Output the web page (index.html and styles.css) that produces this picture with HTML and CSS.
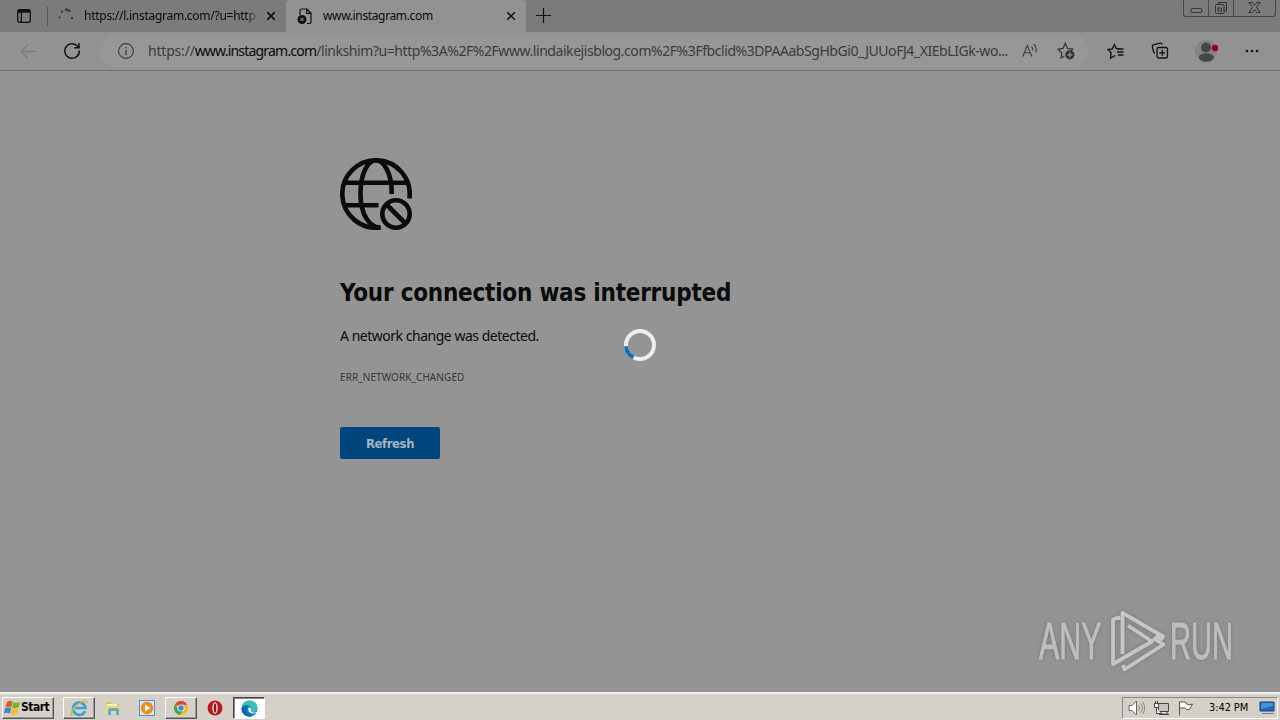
FILE: index.html
```html
<!DOCTYPE html>
<html lang="en">
<head>
    <meta charset="UTF-8">
    <title>www.instagram.com</title>
    <link rel="stylesheet" href="styles.css">
</head>
<body>
    <header class="tabstrip">
        <svg class="tab-actions" width="16" height="16" viewBox="0 0 16 16" fill="none" stroke="#111" stroke-width="1.3"><rect x="1.7" y="1.7" width="12.6" height="12.6" rx="2"/><path d="M2 3.2h12" stroke-width="3"/><path d="M5.3 4v10"/></svg>
        <div class="tab">
            <svg width="16" height="16" viewBox="0 0 16 16" fill="#343434"><circle cx="8.5" cy="1.7" r="1.5"/><circle cx="11.4" cy="2.8" r="1.4"/><circle cx="4" cy="3.7" r="1.1"/><circle cx="1.5" cy="9.5" r="1"/><circle cx="14" cy="10" r="1.2"/></svg>
            <span class="tab-title tab-title-fade">https://l.instagram.com/?u=http</span>
            <svg class="close" width="10" height="10" viewBox="0 0 10 10" stroke="#111" stroke-width="1.7"><path d="M1.2 1.2l7.6 7.6M8.8 1.2L1.2 8.8"/></svg>
        </div>
        <div class="tab active">
            <svg width="16" height="17" viewBox="0 0 16 17" fill="none" stroke="#111" stroke-width="1.2"><path d="M3 7V2.5Q3 1 4.5 1H10l4 4v9q0 1.5-1.5 1.5H10M9.7 1v4.4H14"/><circle cx="5" cy="11.5" r="4.5" fill="#111" stroke="none"/><path d="M3.5 10l3 3M6.5 10l-3 3" stroke="#aaa" stroke-width="1"/></svg>
            <span class="tab-title">www.instagram.com</span>
            <svg class="close" width="10" height="10" viewBox="0 0 10 10" stroke="#111" stroke-width="1.5"><path d="M1.2 1.2l7.6 7.6M8.8 1.2L1.2 8.8"/></svg>
        </div>
        <svg class="new-tab" width="15" height="15" viewBox="0 0 15 15" stroke="#111" stroke-width="1.2"><path d="M7.5 0v15M0 7.5h15"/></svg>
        <div class="window-buttons">
            <span class="win-min"><svg width="13" height="16" viewBox="0 0 13 16" fill="none" stroke="#333"><rect x=".8" y="8.5" width="11" height="4" rx="1.5"/></svg></span>
            <span class="win-max"><svg width="14" height="16" viewBox="0 0 14 16" fill="none" stroke="#333"><rect x="1.5" y="4.5" width="8.5" height="9" rx="1"/><rect x="4" y="8" width="3.5" height="3"/><path d="M4.5 4V2.5h8V11H10"/></svg></span>
            <span class="win-close"><svg width="13" height="16" viewBox="0 0 13 16" fill="none" stroke="#333"><path d="M.8 2.5h3.5l2.2 3 2.2-3h3.5L8.5 7.5l3.7 5H8.7l-2.2-3-2.2 3H.8l3.7-5z"/></svg></span>
        </div>
    </header>

    <nav class="toolbar">
        <svg class="back" width="17" height="15" viewBox="0 0 17 15" fill="none" stroke="#7b7b7b" stroke-width="1.3"><path d="M16.5 7.5H1M7.5 1L1 7.5 7.5 14"/></svg>
        <svg class="reload" width="18" height="18" viewBox="0 0 18 18" fill="none" stroke="#111" stroke-width="1.5"><path d="M16.3 8.5a7.3 7.3 0 1 1-2.5-5l2 2M16 1v4.7h-4.7"/></svg>
        <div class="omnibox">
            <svg class="info" width="16" height="16" viewBox="0 0 16 16" fill="none" stroke="#3d3d3d" stroke-width="1.1"><circle cx="8" cy="8" r="7.4"/><path d="M8 7v5M8 4v1.5" stroke-width="1.4"/></svg>
            <span class="url"><span class="scheme">https://</span><span class="host">www.instagram.com</span><span class="path">/linkshim?u=http%3A%2F%2Fwww.lindaikejisblog.com%2F%3Ffbclid%3DPAAabSgHbGi0_JUUoFJ4_XIEbLIGk-wo...</span></span>
            <svg class="read-aloud" width="16" height="16" viewBox="0 0 16 16" fill="none" stroke="#3d3d3d" stroke-width="1.1"><path d="M.8 13.5L5.3 2.5l4.5 11M2.4 9.7h5.9M9.5 3.5q1.7 1.8.8 4M11.8 1q3.8 3.6 1.7 8.2"/></svg>
            <svg class="fav-add" width="18" height="18" viewBox="0 0 18 18" fill="none" stroke="#333" stroke-width="1.2"><path d="M7.3 14.2L4 16l.8-5L1 7.2l5-.8L8.2 1.5l2.4 4.9 5.2.7-2 2"/><circle cx="12.8" cy="12.8" r="4.6" fill="#333" stroke="none"/><path d="M12.8 10.3v5M10.3 12.8h5" stroke="#999"/></svg>
        </div>
        <svg class="favorites" width="18" height="17" viewBox="0 0 18 17" fill="none" stroke="#111" stroke-width="1.3"><path d="M12 5.6H9.4L7.3 1.5 5.3 5.9 1 6.5l3.2 3.2L3.5 15l4.8-2.5M10.5 6h6M10 9h6.5M11 12h5.5"/></svg>
        <svg class="collections" width="18" height="18" viewBox="0 0 18 18" fill="none" stroke="#111" stroke-width="1.3"><path d="M3.8 11.5Q2.7 10.5 2.4 9L1.4 5q-.4-1.7 1-2.1L9 1.2q1.7-.3 2.3 1.3"/><rect x="6" y="5.5" width="10.5" height="10.5" rx="1.8"/><path d="M11.25 7.8v6M8.25 10.8h6"/></svg>
        <svg class="profile" width="24" height="24" viewBox="0 0 24 24"><circle cx="11" cy="12" r="11" fill="#848484"/><circle cx="11" cy="8.5" r="5" fill="#464646"/><ellipse cx="11.3" cy="18.5" rx="7.5" ry="4.2" fill="#464646"/><circle cx="20" cy="9" r="3.2" fill="#910714"/></svg>
        <svg class="more" width="14" height="4" viewBox="0 0 14 4" fill="#111"><circle cx="2" cy="2" r="1.3"/><circle cx="7" cy="2" r="1.3"/><circle cx="12" cy="2" r="1.3"/></svg>
    </nav>

    <main class="page">
        <svg class="globe" width="72" height="72" viewBox="0 0 72 72" fill="none" stroke="#0b0b0b" stroke-width="4.6">
            <path d="M69.4 40.5A33.7 33.7 0 1 0 40.5 69.4M4 24.7h64M4 47.3h34.5"/>
            <path d="M40.5 69.5C30 70 20.5 57 20.5 36S28 2.3 36 2.3 52 16 51.7 36"/>
            <circle cx="56" cy="56" r="13.7"/><path d="M47 47l18 18"/>
        </svg>
        <h1>Your connection was interrupted</h1>
        <p class="message">A network change was detected.</p>
        <p class="code">ERR_NETWORK_CHANGED</p>
        <button class="refresh">Refresh</button>

        <svg class="spinner" width="34" height="34" viewBox="0 0 34 34" fill="none" stroke-width="4"><circle cx="17" cy="17" r="14" stroke="#eee"/><path d="M3 18.3A14 14 0 0 0 10.5 29.4" stroke="#126fbc"/></svg>

        <div class="watermark">
            <span class="any">ANY</span>
            <svg width="56" height="62" viewBox="0 0 56 62" fill="none" stroke="#c6c6c6" stroke-width="3.8" stroke-linejoin="round">
                <path d="M8.5 10V7.5L3 9.5V54L42 31.5 18 15.5"/>
                <path d="M12.5 44V2.8L53 26.5l-1.5 2.5-6-3"/>
                <path d="M43 28L53.5 34.5 14.5 59.5l-1.7-4.5"/>
            </svg>
            <span class="run">RUN</span>
        </div>
    </main>

    <footer class="taskbar">
        <div class="start">
            <svg width="17" height="16" viewBox="0 0 17 16"><path d="M3 2Q5.5 0 8.5 1.5L7.4 7.2Q4.5 6 1.5 7.5z" fill="#e65a24"/><path d="M9.2 2q3 1.5 7 0l-1.6 5.5q-3 1.5-6.4.2z" fill="#79b52c"/><path d="M1.2 8.2q3-1.3 6-.2l-1.3 5.5Q3 12-.3 13.5z" fill="#3b89d0"/><path d="M7.9 8.5q3 1.2 6.4 0l-1.5 5.5q-3 1.5-6.4 0z" fill="#f6bd24"/></svg>
            <span>Start</span>
        </div>
        <div class="task raised">
            <svg width="18" height="18" viewBox="0 0 18 18" fill="none"><path d="M15 12A6.2 6.2 0 1 1 15.4 9H5" stroke="#35a4dd" stroke-width="2.7"/><path d="M3 15C-1 19 .5 12 6 7S18-.5 16.5 4" stroke="#e6b52d" stroke-width="1.4"/></svg>
        </div>
        <div class="task">
            <svg width="18" height="18" viewBox="0 0 18 18"><path d="M2 3h5l1 2h7v9H2z" fill="#e0c05c"/><path d="M3 5h10v5H3z" fill="#fff4b6"/><path d="M2 7h14v7H2z" fill="#f0d576"/><path d="M4 16v-5q0-2 2-2h7q2 0 2 2v5h-3v-4H7v4z" fill="#5cabd3"/></svg>
        </div>
        <div class="task">
            <svg width="18" height="18" viewBox="0 0 18 18"><rect x="1.5" y="1.5" width="15" height="15" fill="#d5e8f6" stroke="#4f8fc6"/><circle cx="9" cy="9" r="6.2" fill="#f18a16"/><path d="M7 5.5v7L12.5 9z" fill="#fff"/></svg>
        </div>
        <div class="task raised">
            <svg width="16" height="16" viewBox="0 0 16 16"><circle cx="8" cy="8" r="7" fill="#e9bd27"/><path d="M8 8L2 4.4A7 7 0 0 1 14.2 4.8H8z" fill="#d74637"/><path d="M2 4.4A7 7 0 0 0 7 15l3.5-5.5L8 11 5 9z" fill="#42a650"/><circle cx="8" cy="8" r="3.6" fill="#f3f3f3"/><circle cx="8" cy="8" r="2.7" fill="#4587d7"/></svg>
        </div>
        <div class="task opera">
            <svg width="16" height="16" viewBox="0 0 16 16"><circle cx="8" cy="8" r="7.5" fill="#bd1820"/><ellipse cx="8" cy="8" rx="2.7" ry="5.7" fill="#eee"/><ellipse cx="8" cy="8" rx="1.3" ry="4.8" fill="#9b1018"/></svg>
        </div>
        <div class="task pressed">
            <svg width="17" height="17" viewBox="0 0 17 17"><circle cx="8.5" cy="8.5" r="8" fill="#087fcb"/><path d="M.7 7A8 8 0 0 1 16.5 8q0 4-4.500 4-2.500 0-2-1.500 2-3.500-2-5Q4 4 .7 7z" fill="#37c5b4"/><path d="M.5 8.5Q3 4.5 7 6q-3 2-1.5 6t6.500 3.500Q8 18 4 15.200T.5 8.500z" fill="#1264ac"/><path d="M8.200 7q-1.700 2-.3 4.700 2.500 3 7.500 1l.7-.7q-3 1-5 0-2-.8-1-2.200.8-1.600-1.900-2.800z" fill="#fff"/></svg>
        </div>
        <div class="tray">
            <svg width="18" height="16" viewBox="0 0 18 16" fill="#fff" stroke="#666"><path d="M1 5.5h3L8.500 1v14L4 10.500H1z"/><path d="M10.500 5.500q2 2.500 0 5M12.500 3.500q4 4.500 0 9M14.700 2q4 6 0 12" fill="none" stroke="#888"/></svg>
            <svg width="17" height="16" viewBox="0 0 17 16" fill="#eee" stroke="#444"><path d="M5.500 3.500h10v8h-10z" fill="#c4c4c4"/><path d="M8 12v2h6v-2M6 14.500h10"/><path d="M1.500 3.500h4v4h-4zM2.500 1v2M4.500 1v2M3.500 7.500v6H8"/></svg>
            <svg width="17" height="16" viewBox="0 0 17 16" fill="#fff" stroke="#555"><path d="M2.500 15.500V1.500M2.500 2h6l1 2q3 1.500 6 0l-3 5.500q-3 .5-5-1.500h-5z"/></svg>
            <span class="clock">3:42 PM</span>
            <svg width="16" height="14" viewBox="0 0 16 14"><path d="M1 1h14v9H1z" fill="#2167bd" stroke="#174477"/><path d="M2 2h12v3L2 8z" fill="#4791db"/><path d="M3 12.500h12" stroke="#707987"/></svg>
        </div>
    </footer>
</body>
</html>
```

FILE: styles.css
```css
* { box-sizing: border-box; }
body { margin: 0; width: 1280px; height: 720px; overflow: hidden; display: flex; flex-direction: column; background: #949494; color: #0b0b0b; font-family: "Noto Sans", "Open Sans", sans-serif; }
svg { display: block; flex: none; }

.tabstrip { height: 32px; flex: none; display: flex; background: #7b7b7b; }
.tab-actions { margin: 8px 0 0 16px; }
.tab { display: flex; align-items: center; width: 239px; height: 32px; margin-left: 15px; padding: 0 10px 0 11px; position: relative; white-space: nowrap; }
.tab::before { content: ""; position: absolute; left: 0; top: 7px; width: 1px; height: 19px; background: #555; }
.tab-title { width: 176px; margin-left: 10px; font-size: 12px; line-height: 18px; letter-spacing: -0.36px; }
.tab-title-fade { letter-spacing: -0.27px; -webkit-mask-image: linear-gradient(to right, #000 92%, transparent); mask-image: linear-gradient(to right, #000 92%, transparent); }
.tab .close { margin-left: auto; }
.tab.active { width: 240px; margin-left: 0; background: #929292; border-radius: 4px 4px 0 0; }
.tab.active::before { display: none; }
.new-tab { margin: 8px 0 0 10px; }
.window-buttons { display: flex; margin: 0 4px 0 auto; height: 17px; border: 1px solid #484848; border-top: 0; border-radius: 0 0 3px 3px; }
.window-buttons span { display: flex; justify-content: center; width: 25px; border-right: 1px solid #484848; }
.window-buttons .win-close { width: 41px; border: 0; }

.toolbar { height: 39px; flex: none; display: flex; align-items: center; background: #929292; border-bottom: 1px solid #6f6f6f; }
.back { margin-left: 20px; }
.reload { margin-left: 26px; }
.omnibox { width: 990px; height: 32px; margin-left: 18px; padding-left: 19px; display: flex; align-items: center; background: #979797; border-radius: 16px; }
.url { width: 862px; flex: none; margin-left: 14px; font-size: 14px; line-height: 20px; white-space: nowrap; color: #3b3b3b; }
.scheme { letter-spacing: -0.2px; }
.host { color: #080808; letter-spacing: -0.8px; }
.path { letter-spacing: -0.44px; }
.read-aloud { margin-left: 12px; }
.fav-add { margin-left: 19px; }
.favorites { margin-left: 18px; }
.collections { margin-left: 26px; }
.profile { margin-left: 26px; }
.more { margin-left: 26px; }

.page { flex: 1; position: relative; padding: 87px 0 0 340px; }
h1 { margin: 45px 0 0; font: bold 24px/36px "DejaVu Sans Condensed", "DejaVu Sans", sans-serif; font-stretch: condensed; letter-spacing: -0.23px; white-space: nowrap; }
.message { margin: 15px 0 0; font-size: 14px; line-height: 20px; letter-spacing: -0.48px; }
.code { margin: 23px 0 0; font-size: 10px; line-height: 16px; letter-spacing: 0.08px; color: #373737; }
.refresh { display: block; width: 100px; height: 32px; margin-top: 42px; padding: 1px 0 0; border: 0; border-radius: 2px; background: #00457c; color: #a5b5c1; font: bold 13px/31px "DejaVu Sans Condensed", "DejaVu Sans", sans-serif; font-stretch: condensed; letter-spacing: -0.4px; }
.spinner { position: absolute; left: 623px; top: 257px; }
.watermark { position: absolute; right: 48px; bottom: 20px; display: flex; align-items: center; color: #bebebe; font: 52px/62px "Liberation Sans", sans-serif; filter: drop-shadow(0 0 2px #777); }
.watermark span { width: 62px; white-space: nowrap; transform: scaleX(.56); transform-origin: left; -webkit-text-stroke: 1px #bebebe; }
.watermark .any { transform: scaleX(.585); }
.watermark svg { margin: 0 4px 0 9px; }

.taskbar { height: 28px; flex: none; display: flex; align-items: center; padding: 2px 2px 0; background: #d5d0c8; border-top: 2px solid #f4f2ee; }
.start, .raised { border: 1px solid; border-color: #fff #555 #555 #fff; box-shadow: inset -1px -1px #999; }
.start { width: 52px; height: 22px; display: flex; align-items: center; padding-left: 1px; font: bold 12px/18px "DejaVu Sans Condensed", "DejaVu Sans", sans-serif; font-stretch: condensed; letter-spacing: -0.5px; color: #000; }
.start span { margin-top: -2px; }
.task { display: flex; align-items: center; justify-content: center; width: 32px; height: 22px; margin-left: 2px; }
.start + .task { margin-left: 9px; }
.pressed { margin-left: 2px; background: #fff; border: 1px solid; border-color: #444 #fff #fff #444; box-shadow: inset 1px 1px #888; }
.tray { width: 156px; height: 22px; margin-left: auto; padding: 0 1px 0 5px; display: flex; align-items: center; gap: 7px; border: 1px solid; border-color: #888 #fff #fff #888; }
.clock { margin: 0 4px 0 8px; font: 11px/18px "DejaVu Sans Condensed", "DejaVu Sans", sans-serif; font-stretch: condensed; letter-spacing: -0.1px; color: #000; white-space: nowrap; }
```
